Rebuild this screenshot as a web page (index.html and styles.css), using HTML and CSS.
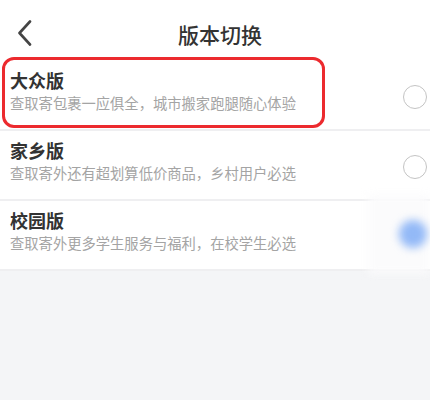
FILE: index.html
```html
<!DOCTYPE html>
<html lang="zh">
<head>
<meta charset="utf-8">
<link rel="stylesheet" href="styles.css">
</head>
<body>
<div class="page">
  <header class="header">
    <svg class="back" width="16" height="26" viewBox="0 0 16 26"><path d="M13 1.5 L2.5 13 L13 24.5" fill="none" stroke="#444" stroke-width="2.6" stroke-linecap="round" stroke-linejoin="round"/></svg>
    <div class="title">版本切换</div>
  </header>
  <div class="list">
    <div class="row">
      <div class="text">
        <div class="name">大众版</div>
        <div class="desc">查取寄包裹一应俱全，城市搬家跑腿随心体验</div>
      </div>
      <span class="radio"></span>
      <div class="highlight"></div>
    </div>
    <div class="row">
      <div class="text">
        <div class="name">家乡版</div>
        <div class="desc">查取寄外还有超划算低价商品，乡村用户必选</div>
      </div>
      <span class="radio"></span>
    </div>
    <div class="row">
      <div class="text">
        <div class="name">校园版</div>
        <div class="desc">查取寄外更多学生服务与福利，在校学生必选</div>
      </div>
      <div class="haze"></div>
      <span class="radio checked"></span>
    </div>
  </div>
</div>
</body>
</html>
```

FILE: styles.css
```css
html, body {
  margin: 0;
  padding: 0;
  background: #f4f5f7;
}
.page {
  width: 430px;
  height: 400px;
  font-family: "Noto Sans CJK SC", "Noto Sans", sans-serif;
  background: #f4f5f7;
  overflow: hidden;
}
.header {
  position: relative;
  height: 61px;
  background: #fff;
  display: flex;
  align-items: center;
  justify-content: center;
}
.back {
  position: absolute;
  left: 17px;
  top: 20px;
}
.title {
  font-size: 21px;
  font-weight: 500;
  color: #333;
  line-height: 24px;
  margin-top: 6px;
  margin-left: 10px;
}
.list {
  display: flex;
  flex-direction: column;
}
.row {
  position: relative;
  height: 70px;
  background: #fff;
  border-bottom: 2px solid #efeff1;
  display: flex;
  align-items: flex-start;
  justify-content: space-between;
  padding: 8px 3px 0 10px;
  box-sizing: border-box;
}
.text {
  display: flex;
  flex-direction: column;
  gap: 2px;
}
.name {
  font-size: 18px;
  line-height: 22px;
  font-weight: 700;
  color: #333;
}
.desc {
  font-size: 14.3px;
  line-height: 20px;
  color: #a4a4a4;
}
.radio {
  position: relative;
  z-index: 2;
  width: 22px;
  height: 22px;
  border: 1.2px solid #c4c4c4;
  border-radius: 50%;
  margin-top: 16px;
  box-sizing: content-box;
}
.radio.checked {
  border: none;
  width: 28px;
  height: 28px;
  margin-top: 11px;
  margin-right: 0;
  background: #93b9f7;
  filter: blur(4px);
}
.highlight {
  position: absolute;
  left: 2px;
  top: -4px;
  width: 323px;
  height: 71px;
  border: 3.5px solid #ec2a2e;
  border-radius: 12px;
  box-sizing: border-box;
}
.haze {
  position: absolute;
  right: 0;
  top: -6px;
  width: 62px;
  height: 78px;
  background: #fbfbfc;
  filter: blur(5px);
  z-index: 1;
}
```
